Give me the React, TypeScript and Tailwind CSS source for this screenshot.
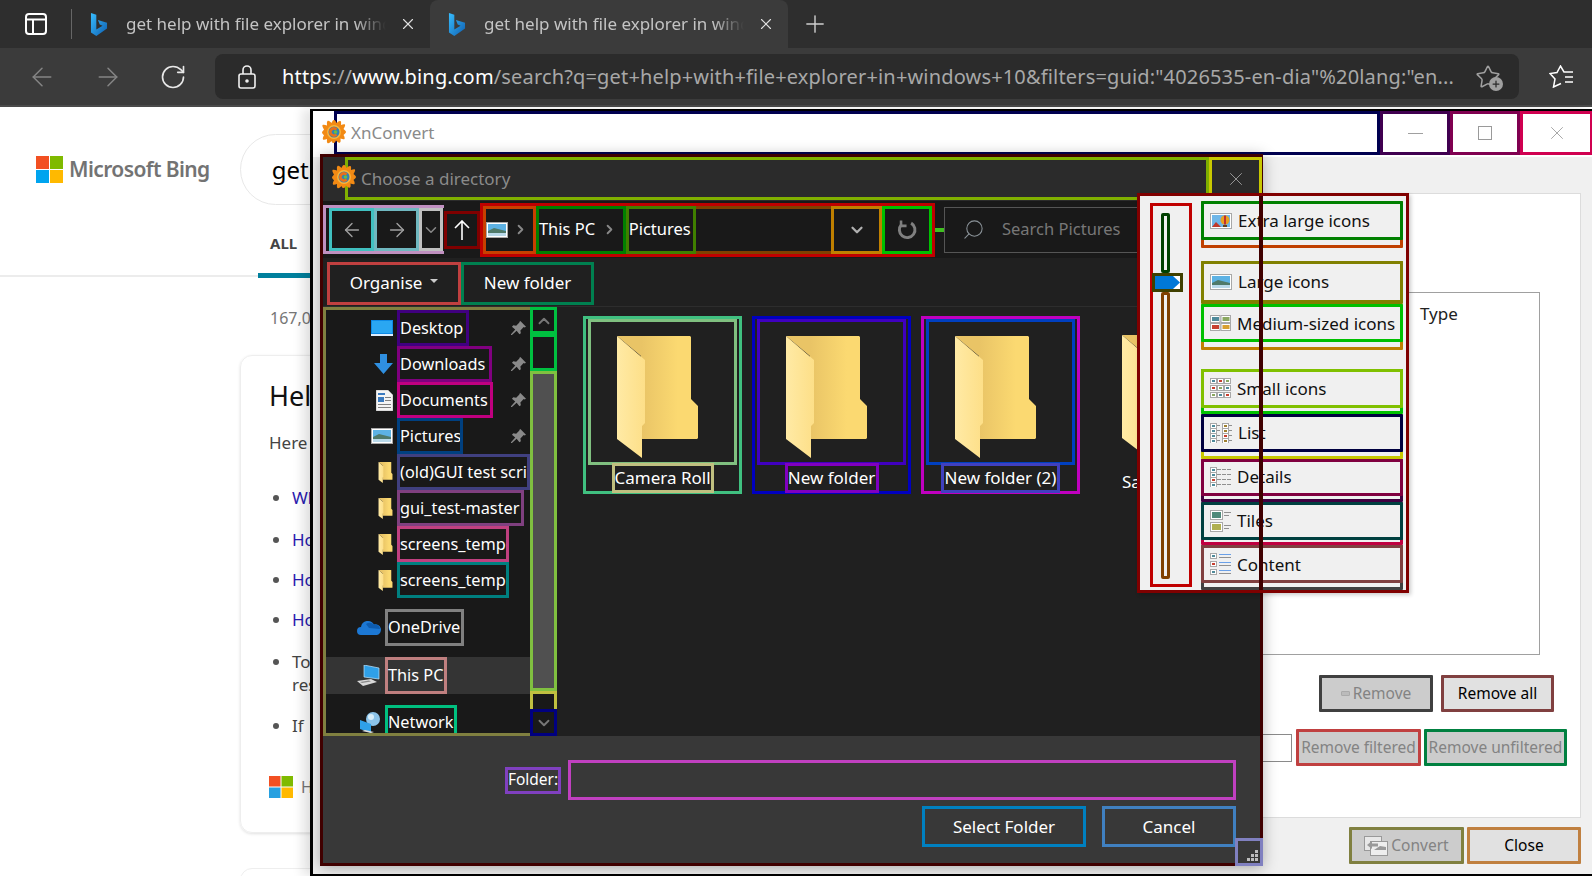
import React from "react";
import { ArrowLeft, ArrowRight, ChevronDown, ChevronRight, ChevronUp, Plus, RotateCw, Search, X, Star } from "lucide-react";

const Folder = ({ className }: { className: string }) => (
  <svg viewBox="0 0 81 122" className={className}>
    <defs>
      <linearGradient id="fb" x1="0" x2="1" y1="0" y2="0">
        <stop offset="0.3" stopColor="#e9c466" />
        <stop offset="0.75" stopColor="#fbd971" />
      </linearGradient>
      <linearGradient id="ff" x1="0" x2="1" y1="0" y2="0">
        <stop offset="0" stopColor="#ffeaa5" />
        <stop offset="1" stopColor="#fddf88" />
      </linearGradient>
    </defs>
    <path d="M0 0H73L74 1V63L81 70V102L80 103H24V20z" fill="url(#fb)" />
    <path d="M0 0L28 24V87L25 90V122L0 103z" fill="url(#ff)" />
  </svg>
);

const XnLogo = ({ className }: { className: string }) => (
  <svg viewBox="0 0 24 24" className={className}>
    <path d="M12 0c1.500 0 2 2 2.500 3 1-1 2.500-2.500 4-2 1 .5.500 2.500.5 4 1.500-.5 3-1 4-.5.500 1-.5 3-1.500 4.500 1 1 2.500 2 2.500 3s-1.500 2-2.500 3c1 1.500 1.500 3 1 4-1 .5-2.500 0-4-.5 0 1.500.5 3-.5 4s-3-1-4-2c-.5 1-1 2.500-2.500 2.500S10 22 9.500 21c-1 1-3 3-4 2s-.5-2.500-.5-4c-1.500.5-3 1-4 .5-.5-1 0-2.500 1-4C1.500 14.500 0 13.500 0 12.500s1.500-2 2-3C1 8 0 6 .5 5c1-.5 3 0 4.500.5 0-1.500-.5-3.500.5-4.500s3 1 4 2C10 2 10.500 0 12 0z" fill="#f28a14" />
    <circle cx="12" cy="12" r="7" fill="#fbb53a" />
    <circle cx="12" cy="12" r="5.500" fill="#2f82b8" />
    <path d="M15.500 8.500A5 5 0 1015.500 15.500L13.500 13.500A2.200 2.200 0 1113.500 10.500z" fill="#e8701a" />
    <circle cx="13.500" cy="12" r="1.800" fill="#6dbb3f" />
  </svg>
);

const Landscape = ({ className }: { className: string }) => (
  <svg viewBox="0 0 22 16" className={className}>
    <rect x="0.5" y="0.5" width="21" height="15" fill="#fff" stroke="#a8a8a8" />
    <rect x="2" y="2" width="18" height="7" fill="#5db2e4" />
    <path d="M2 9L8 6l12 3v5H2z" fill="#4f7a6a" />
    <rect x="2" y="11" width="18" height="3" fill="#b9d9ea" />
  </svg>
);

const Thumb = ({ x, y, c }: { x: number; y: number; c: string }) => (
  <g>
    <rect x={x + 0.5} y={y + 0.5} width="6" height="5" fill="#fff" stroke="#a8a8a8" />
    <rect x={x + 2} y={y + 2} width="3" height="2" fill={c} />
  </g>
);

const ExtraIcon = () => (
  <svg viewBox="0 0 22 16" className="w-[22px] h-4 shrink-0">
    <rect x="0.5" y="0.5" width="21" height="15" fill="#fff" stroke="#a8a8a8" />
    <rect x="2" y="2" width="18" height="12" fill="#6fb6e8" />
    <path d="M2 14l4-5 5 5z" fill="#c0392b" />
    <circle cx="15" cy="7" r="4.5" fill="#e8a020" />
    <rect x="14" y="2.5" width="2" height="9" fill="#c03030" />
    <rect x="13" y="12" width="4" height="2" fill="#604020" />
  </svg>
);
const MediumIcon = () => (
  <svg viewBox="0 0 21 16" className="w-[21px] h-4 shrink-0">
    <rect x="0.5" y="0.5" width="9.5" height="7" fill="#fff" stroke="#a8a8a8" />
    <rect x="11" y="0.5" width="9.5" height="7" fill="#fff" stroke="#a8a8a8" />
    <rect x="0.5" y="8.5" width="9.5" height="7" fill="#fff" stroke="#a8a8a8" />
    <rect x="11" y="8.5" width="9.5" height="7" fill="#fff" stroke="#a8a8a8" />
    <rect x="2" y="2" width="7" height="4" fill="#4f8a9a" />
    <rect x="12.5" y="2" width="7" height="4" fill="#8aa860" />
    <rect x="2" y="10" width="7" height="4" fill="#c84030" />
    <rect x="12.5" y="10" width="7" height="4" fill="#d8a030" />
  </svg>
);
const SmallIcon = () => (
  <svg viewBox="0 0 21 21" className="w-[21px] h-[21px] shrink-0">
    {[0, 7, 14].map((y) =>
      [0, 7, 14].map((x, i) => <Thumb key={`${x}-${y}`} x={x} y={y} c={["#4f8a9a", "#c84030", "#8aa860"][(i + y) % 3]} />)
    )}
  </svg>
);
const ListIcon = () => (
  <svg viewBox="0 0 22 20" className="w-[22px] h-5 shrink-0">
    {[0, 5, 10, 15].map((y) => (
      <g key={y}>
        <Thumb x={0} y={y} c="#4f8a9a" />
        <rect x="7" y={y + 2} width="3" height="1" fill="#909090" />
        <Thumb x={12} y={y} c={y === 10 ? "#c84030" : "#a08030"} />
        <rect x="19" y={y + 2} width="3" height="1" fill="#909090" />
      </g>
    ))}
  </svg>
);
const DetailsIcon = () => (
  <svg viewBox="0 0 21 20" className="w-[21px] h-5 shrink-0">
    {[0, 5, 10, 15].map((y) => (
      <g key={y}>
        <Thumb x={0} y={y} c={y === 10 ? "#c84030" : "#4f8a9a"} />
        <rect x="7" y={y + 2} width="4" height="1" fill="#909090" />
        <rect x="12" y={y + 2} width="4" height="1" fill="#909090" />
        <rect x="17" y={y + 2} width="4" height="1" fill="#909090" />
      </g>
    ))}
  </svg>
);
const TilesIcon = () => (
  <svg viewBox="0 0 21 22" className="w-[21px] h-[22px] shrink-0">
    <rect x="0.5" y="0.5" width="12" height="9" fill="#fff" stroke="#a8a8a8" />
    <rect x="2" y="2" width="9" height="6" fill="#4f8a7a" />
    <rect x="14" y="2" width="7" height="1" fill="#909090" />
    <rect x="14" y="5" width="5" height="1" fill="#909090" />
    <rect x="0.5" y="12.5" width="12" height="9" fill="#fff" stroke="#a8a8a8" />
    <rect x="2" y="14" width="9" height="6" fill="#b0b050" />
    <rect x="14" y="15" width="7" height="1" fill="#909090" />
    <rect x="14" y="18" width="5" height="1" fill="#909090" />
  </svg>
);
const ContentIcon = () => (
  <svg viewBox="0 0 21 22" className="w-[21px] h-[22px] shrink-0">
    {[0, 8, 16].map((y) => (
      <g key={y}>
        <Thumb x={0} y={y} c={y === 8 ? "#c84030" : "#4f8a9a"} />
        <rect x="9" y={y + 1} width="12" height="1" fill="#6aa0e8" />
        <rect x="9" y={y + 4} width="12" height="1" fill="#909090" />
      </g>
    ))}
  </svg>
);

const BingB = () => (
  <svg viewBox="0 0 20 28" className="w-[18px] h-[25px] shrink-0">
    <defs>
      <linearGradient id="bb" x1="0" x2="1" y1="0" y2="1">
        <stop offset="0" stopColor="#37bdff" />
        <stop offset="1" stopColor="#0f5fb0" />
      </linearGradient>
    </defs>
    <path d="M1 1l6 2v16.5l7-4-3.2-1.6-2-5L19 12v6.5L7 27l-6-4z" fill="url(#bb)" />
  </svg>
);

const Tab = ({ active }: { active?: boolean }) => (
  <div className={`flex h-[48px] w-[358px] items-center pl-[18px] ${active ? "rounded-t-lg bg-[#3b3b3b]" : ""}`}>
    <BingB />
    <span className="ml-[18px] w-[260px] overflow-hidden whitespace-nowrap text-[17px] text-[#c4c4c4] [mask-image:linear-gradient(to_right,black_88%,transparent)]">
      get help with file explorer in windows 10
    </span>
    <X className="ml-[13px] size-[18px] text-[#e0e0e0]" strokeWidth={1.5} />
  </div>
);

const pinned = (
  <svg viewBox="0 0 16 16" className="absolute right-[4px] top-[11px] size-[15px]">
    <path d="M10 0l6 6-1.5 1-1-.5L10 10l.5 3-1.5 1-3-3.500L1 15l-1 0 0-1 4.500-5L1 6l1.500-1.500 3 .5L9 1.500 8.800 1z" fill="#8a8a8a" />
  </svg>
);

const DesktopIcon = () => (
  <svg viewBox="0 0 22 16" className="w-[22px] h-4"><rect width="22" height="16" fill="#0d8ae6" /><rect x="1" y="1" width="20" height="12" fill="#2aa7f2" /><rect y="14" width="22" height="2" fill="#ddeeff" /></svg>
);
const DownIcon = () => (
  <svg viewBox="0 0 19 20" className="w-[19px] h-5"><path d="M6 0h7v9h6l-9.5 11L0 9h6z" fill="#2f8fe0" /></svg>
);
const DocIcon = () => (
  <svg viewBox="0 0 17 21" className="w-[17px] h-[21px]">
    <path d="M0 0h12l5 5v16H0z" fill="#f4f4f4" stroke="#9a9a9a" strokeWidth="0.6" />
    <rect x="2" y="3" width="7" height="2" fill="#3a7abf" />
    <rect x="2" y="7" width="6" height="5" fill="#3a7abf" />
    <rect x="9" y="7" width="6" height="1" fill="#808080" /><rect x="9" y="10" width="6" height="1" fill="#808080" />
    <rect x="2" y="14" width="13" height="1" fill="#808080" /><rect x="2" y="17" width="13" height="1" fill="#808080" />
  </svg>
);
const Cloud = () => (
  <svg viewBox="0 0 24 15" className="w-6 h-[15px]"><path d="M4 15a4 4 0 010-8 7 7 0 0113-2.500A5 5 0 0120 15z" fill="#1c78d4" /><path d="M9 4a7 7 0 018 .5A5 5 0 0123 9L12 8z" fill="#0d5cb0" /></svg>
);
const PcIcon = () => (
  <svg viewBox="0 0 24 21" className="w-6 h-[21px]">
    <path d="M7 0l15 3v11L7 12z" fill="#2fa0e8" stroke="#bfe4fa" strokeWidth="0.7" />
    <path d="M0 16l14-2 6 3-14 4z" fill="#d8d8d8" />
    <path d="M3 17l9-1.500 2 1-9 1.500z" fill="#888" />
  </svg>
);
const NetIcon = () => (
  <svg viewBox="0 0 22 21" className="w-[22px] h-[21px]">
    <circle cx="14" cy="7" r="7" fill="#8cc4ea" /><circle cx="12" cy="5" r="3" fill="#d8eefa" />
    <path d="M1 8l11 4v9L1 17z" fill="#2fa0e8" />
    <path d="M3 19l9 2 3-1-9-2z" fill="#ddd" />
  </svg>
);

const NavRow = ({ icon, label, color, pin }: { icon: React.ReactNode; label: string; color: string; pin?: boolean }) => (
  <div className="relative flex h-[36px] items-stretch">
    <div className="flex w-[71px] shrink-0 items-center justify-end pr-[4px]">{icon}</div>
    <span className={`flex items-center overflow-hidden whitespace-nowrap border-[3px] text-[16.3px] ${color}`}>{label}</span>
    {pin && pinned}
  </div>
);

const FolderTile = ({ label, outer, inner, lab, w }: { label: string; outer: string; inner: string; lab: string; w: string }) => (
  <div className={`relative flex h-[178px] w-[159px] shrink-0 flex-col items-center border-[3px] ${outer}`}>
    <div className={`flex h-[146px] w-[149px] shrink-0 justify-center border-[3px] pt-[14px] ${inner}`}>
      <Folder className="ml-[-10px] h-[122px] w-[81px]" />
    </div>
    <span className={`mt-[-2px] flex h-[30px] shrink-0 items-center justify-center whitespace-nowrap border-[3px] ${w} ${lab}`}>{label}</span>
  </div>
);

const MenuItem = ({ icon, label, inner, outer, h, oh, mt }: { icon: React.ReactNode; label: string; inner: string; outer: string; h: string; oh: string; mt?: string }) => (
  <div className={`rounded-[1px] border-[3px] ${outer} ${oh} ${mt ?? ""}`}>
    <div className={`-m-[3px] flex items-center gap-[6px] rounded-[1px] border-[3px] pl-[6px] ${inner} ${h}`}>
      {icon}
      <span className="whitespace-nowrap">{label}</span>
    </div>
  </div>
);

const GreyBtn = ({ label, box, icon, w, dark }: { label: string; box: string; icon?: React.ReactNode; w: string; dark?: boolean }) => (
  <div className={`flex h-[37px] items-center justify-center gap-[3px] rounded-[1px] border-[3px] text-[15.5px] ${box} ${w} ${dark ? "bg-[#e1e1e1] text-black" : "bg-[#cccccc] text-[#838383]"}`}>
    {icon}
    <span className="whitespace-nowrap">{label}</span>
  </div>
);

export default function App() {
  return (
    <div className="relative flex h-[876px] w-[1592px] flex-col overflow-hidden bg-white font-['Noto_Sans',sans-serif]">
      {/* Browser tabs */}
      <div className="flex h-[48px] shrink-0 items-center bg-[#2e2e2e]">
        <div className="flex w-[71px] justify-center">
          <svg viewBox="0 0 22 22" className="size-[22px]" fill="none" stroke="#fff" strokeWidth="2">
            <rect x="1" y="1" width="20" height="20" rx="3" />
            <path d="M1 6.500h20M8 6.500V21" />
          </svg>
        </div>
        <div className="h-[30px] w-px bg-[#666]" />
        <Tab />
        <Tab active />
        <Plus className="ml-[13px] size-[28px] text-[#d0d0d0]" strokeWidth={1.2} />
      </div>

      {/* Address bar */}
      <div className="flex h-[59px] shrink-0 items-center border-b-2 border-[#4a4a4a] bg-[#3b3b3b]">
        <ArrowLeft className="ml-[27px] size-[30px] text-[#858585]" strokeWidth={1.2} />
        <ArrowRight className="ml-[36px] size-[30px] text-[#858585]" strokeWidth={1.2} />
        <RotateCw className="ml-[36px] size-[28px] text-[#e8e8e8]" strokeWidth={1.4} />
        <div className="ml-[28px] flex h-[45px] w-[1304px] items-center rounded-lg bg-[#2b2b2b] pl-[23px] text-[20px] text-[#a8a8a8]">
          <svg viewBox="0 0 18 24" className="h-[24px] w-[18px] shrink-0" fill="none" stroke="#f0f0f0" strokeWidth="1.6">
            <rect x="1" y="9" width="16" height="14" rx="2" />
            <path d="M5 9V5a4 4 0 018 0v4" />
            <circle cx="9" cy="16" r="1" fill="#f0f0f0" />
          </svg>
          <span className="ml-[26px] whitespace-nowrap tracking-[0.16px]">
            <span className="text-white">https</span>://<span className="text-white">www.bing.com</span>/search?q=get+help+with+file+explorer+in+windows+10&filters=guid:"4026535-en-dia"%20lang:"en...
          </span>
          <div className="relative ml-auto mr-[18px] shrink-0">
            <Star className="size-[26px] text-[#a0a0a0]" strokeWidth={1.4} />
            <div className="absolute -bottom-[1px] -right-[2px] flex size-[14px] items-center justify-center rounded-full bg-[#a0a0a0]">
              <Plus className="size-[10px] text-[#2b2b2b]" strokeWidth={3} />
            </div>
          </div>
        </div>
        <svg viewBox="0 0 24 23" className="ml-[30px] h-[23px] w-[24px]" fill="none" stroke="#fff" strokeWidth="1.5">
          <path d="M24 7H15L11.500 1 8 7.500 1 8.500 6 14 4.500 22l7.500-3.500M16 12h8M16 17h8" />
        </svg>
      </div>

      {/* Search page behind the windows */}
      <div className="w-[310px] flex-1 overflow-hidden bg-white">
        <div className="mt-[27px] flex h-[71px] items-center pl-[36px]">
          <svg viewBox="0 0 27 27" className="size-[27px] shrink-0">
            <rect width="13" height="13" fill="#f25022" /><rect x="14" width="13" height="13" fill="#7fba00" />
            <rect y="14" width="13" height="13" fill="#00a4ef" /><rect x="14" y="14" width="13" height="13" fill="#ffb900" />
          </svg>
          <span className="ml-[6px] whitespace-nowrap text-[21px] font-semibold tracking-[-0.6px] text-[#737373]">Microsoft Bing</span>
          <div className="ml-[30px] flex h-[71px] w-[700px] shrink-0 items-center rounded-[36px] border border-[#e8e8e8] pl-[31px] text-[24px] text-black">get</div>
        </div>
        <div className="mt-[25px] h-[47px] border-b-2 border-[#ececec] pl-[258px]">
          <div className="h-[48px] w-[60px] border-b-[5px] border-[#00809d] pl-[12px] pt-[2px] text-[15px] font-bold text-[#444]">ALL</div>
        </div>
        <div className="ml-[270px] mt-[31px] whitespace-nowrap text-[16px] leading-5 text-[#767676]">167,000 results</div>
        <div className="ml-[240px] mt-[27px] h-[478px] w-[700px] rounded-xl border border-[#eeeeee] pl-[28px] pt-[20px] shadow-[0_1px_3px_rgba(0,0,0,0.12)]">
          <div className="text-[27px] leading-[40px] text-[#111]">Help</div>
          <div className="mt-[15px] text-[17px] leading-6 text-[#444]">Here</div>
          <ul className="mt-[31px] flex list-disc flex-col pl-[23px] text-[17px] leading-[23px] text-[#444] marker:text-[#555]">
            <li className="text-[#2a1ab0]">What</li>
            <li className="mt-[19px] text-[#2a1ab0]">How</li>
            <li className="mt-[17px] text-[#2a1ab0]">How</li>
            <li className="mt-[17px] text-[#2a1ab0]">How</li>
            <li className="mt-[19px]">To<br />restart</li>
            <li className="mt-[18px]">If</li>
          </ul>
          <div className="mt-[38px] flex items-center">
            <svg viewBox="0 0 24 22" className="h-[22px] w-[24px]">
              <rect width="11.500" height="10.500" fill="#f25022" /><rect x="12.500" width="11.500" height="10.500" fill="#7fba00" />
              <rect y="11.500" width="11.500" height="10.500" fill="#27a0e0" /><rect x="12.500" y="11.500" width="11.500" height="10.500" fill="#ffb900" />
            </svg>
            <span className="ml-[8px] text-[16px] text-[#777]">Help</span>
          </div>
        </div>
        <div className="ml-[240px] mt-[35px] h-[60px] w-[700px] rounded-xl border border-[#eeeeee]" />
      </div>

      {/* XnConvert window */}
      <div className="absolute left-[310px] top-[109px] flex h-[767px] w-[1282px] flex-col border-b-[2px] border-l-[3px] border-t-[2px] border-black bg-[#f0f0f0] shadow-[-8px_0_10px_rgba(0,0,0,0.1)]">
        <div className="relative flex h-[46px] shrink-0 bg-white text-[#8a8a8a]">
          <XnLogo className="absolute left-[9px] top-[9px] size-[24px]" />
          <div className="ml-[21px] flex h-[44px] w-[1046px] shrink-0 items-center border-[3px] border-[#000050] pl-[14px] text-[17px]">XnConvert</div>
          <div className="flex h-[44px] w-[70px] shrink-0 items-center justify-center border-[3px] border-[#400050]"><div className="h-px w-[15px] bg-[#a0a0a0]" /></div>
          <div className="flex h-[44px] w-[70px] shrink-0 items-center justify-center border-[3px] border-[#800050]"><div className="h-[14px] w-[14px] border border-[#9a9a9a]" /></div>
          <div className="flex h-[44px] w-[73px] shrink-0 items-center justify-center border-[3px] border-[#d00050]"><X className="size-[22px] text-[#a0a0a0]" strokeWidth={1} /></div>
        </div>
        <div className="flex flex-1 flex-col pb-[11px] pl-[20px] pr-[11px] pt-[36px] text-[16px]">
          <div className="flex h-[625px] shrink-0 flex-col border border-[#dcdcdc] bg-white pr-[40px] pt-[98px]">
            <div className="flex h-[363px] shrink-0 justify-end border border-[#a0a0a0]">
              <div className="h-[40px] w-[127px] pl-[8px] pt-[8px] text-[17px] text-[#222]">Type</div>
            </div>
            <div className="-mr-[14px] mt-[20px] flex justify-end gap-[8px]">
              <GreyBtn label="Remove" box="border-[#404040]" w="w-[114px]" icon={<span className="h-[5px] w-[9px] rounded-[1px] border border-[#aaa] bg-[#bbb]" />} />
              <GreyBtn label="Remove all" box="border-[#804040]" w="w-[113px]" dark />
            </div>
            <div className="-mr-[27px] mt-[17px] flex items-center justify-end gap-[3px]">
              <div className="mr-[1px] h-[28px] w-[100px] border border-[#8a8a8a] bg-white" />
              <GreyBtn label="Remove filtered" box="border-[#c04040]" w="w-[125px]" />
              <GreyBtn label="Remove unfiltered" box="border-[#008040]" w="w-[143px]" />
            </div>
          </div>
          <div className="mt-[9px] flex justify-end gap-[3px]">
            <GreyBtn
              label="Convert"
              box="border-[#808040]"
              w="w-[115px]"
              icon={
                <svg viewBox="0 0 24 20" className="h-[20px] w-[24px]">
                  <rect x="0.500" y="0.500" width="17" height="14" fill="#e8e8e8" stroke="#999" />
                  <rect x="6.500" y="5.500" width="17" height="14" fill="#eee" stroke="#999" />
                  <path d="M3 9l5-4v2.500h6v3H8V13zM22 14H10l6-4 6 1z" fill="#9a9a9a" />
                </svg>
              }
            />
            <GreyBtn label="Close" box="border-[#c08040]" w="w-[114px]" dark />
          </div>
        </div>
      </div>

      {/* Directory dialog */}
      <div className="absolute left-[320px] top-[154px] flex h-[712px] w-[943px] flex-col border-[3px] border-[#400000] bg-[#202020] text-[17px] text-white shadow-[0_2px_14px_rgba(0,0,0,0.3)]">
        <div className="relative flex h-[44px] shrink-0 bg-[#2b2b2b] text-[#8a8a8a]">
          <XnLogo className="absolute left-[9px] top-[8px] size-[24px]" />
          <div className="ml-[22px] flex h-[43px] w-[864px] shrink-0 items-center border-[3px] border-[#80b000] pl-[13px] text-[17px]">Choose a directory</div>
          <div className="flex h-[43px] w-[53px] shrink-0 items-center justify-center border-[3px] border-[#c8c800]"><X className="size-[22px] text-[#a0a0a0]" strokeWidth={1} /></div>
        </div>

        <div className="flex h-[57px] shrink-0 items-center bg-[#191919]">
          <div className="flex h-[49px] w-[121px] shrink-0 border-y-[3px] border-l-[3px] border-[#c090c0] pl-[3px]">
            <div className="flex w-[45px] items-center justify-center border-[3px] border-[#40c0c0]"><ArrowLeft className="size-[22px] text-[#a0a0a0]" strokeWidth={1.5} /></div>
            <div className="flex w-[45px] items-center justify-center border-[3px] border-[#70b8c0]"><ArrowRight className="size-[22px] text-[#a0a0a0]" strokeWidth={1.5} /></div>
            <div className="flex w-[24px] items-center justify-center border-[3px] border-[#c0c0c0]"><ChevronDown className="size-[18px] text-[#8a8a8a]" strokeWidth={2} /></div>
          </div>
          <div className="flex h-[38px] w-[36px] shrink-0 items-center justify-center border-[3px] border-[#800000]"><svg viewBox="0 0 16 20" className="h-[20px] w-[16px]" fill="none" stroke="#fff" strokeWidth="1.6"><path d="M8 20V1M1 8l7-7 7 7" /></svg></div>
          <div className="flex h-[54px] w-[455px] shrink-0 items-center border-[3px] border-[#c00000] text-[16.5px]">
            <div className="flex h-[48px] w-[53px] items-center border-[3px] border-[#c84000]">
              <Landscape className="h-[16px] w-[22px] shrink-0" />
              <ChevronRight className="ml-[5px] size-[15px] shrink-0 text-[#888]" strokeWidth={3} />
            </div>
            <div className="flex h-[48px] w-[90px] items-center whitespace-nowrap border-[3px] border-[#008000]">This PC<ChevronRight className="ml-[7px] size-[15px] shrink-0 text-[#888]" strokeWidth={3} /></div>
            <div className="flex h-[48px] w-[70px] items-center whitespace-nowrap border-[3px] border-[#408000]">Pictures</div>
            <div className="h-[48px] w-[136px] border-y-[3px] border-[#804000]" />
            <div className="flex h-[48px] w-[51px] items-center justify-center border-[3px] border-[#c08000]"><ChevronDown className="size-[18px] text-[#b0b0b0]" strokeWidth={3} /></div>
            <div className="flex h-[48px] w-[50px] items-center justify-center border-[3px] border-[#00c000]">
              <svg viewBox="0 0 24 24" className="size-[22px]" fill="none" stroke="#808080" strokeWidth="3.2">
                <path d="M16.500 4.500a8.500 8.500 0 11-10.500 1.500" /><path d="M5.500 1.500v6h6" strokeWidth="2.800" />
              </svg>
            </div>
          </div>
          <div className="h-[4px] w-[9px] shrink-0 bg-[#40c020]" />
          <div className="flex h-[46px] flex-1 items-center border border-[#555] pl-[17px] text-[16.5px] text-[#777]">
            <Search className="size-[23px] -scale-x-100 text-[#8a9298]" strokeWidth={1.1} />
            <span className="ml-[17px] whitespace-nowrap">Search Pictures</span>
          </div>
        </div>

        <div className="flex h-[49px] shrink-0 items-center border-b border-[#2d2d2d] pl-[4px] pt-[2px]">
          <div className="flex h-[43px] w-[134px] shrink-0 items-center justify-center gap-[8px] border-[3px] border-[#c04040]">Organise
            <svg viewBox="0 0 8 4" className="mb-[4px] h-[4px] w-[8px]"><path d="M0 0h8L4 4z" fill="#ccc" /></svg>
          </div>
          <div className="flex h-[43px] w-[133px] shrink-0 items-center justify-center border-[3px] border-[#008050]">New folder</div>
          <div className="ml-auto mr-[20px] flex h-[40px] w-[42px] items-center border border-[#777] bg-[#555] pl-[6px]"><Landscape className="h-[16px] w-[22px]" /></div>
        </div>

        <div className="flex h-[429px] shrink-0">
          <div className="flex w-[234px] shrink-0 border-y-[3px] border-l-[3px] border-[#808040] bg-[#191919]">
            <div className="w-[204px] shrink-0 overflow-hidden">
              <NavRow icon={<DesktopIcon />} label="Desktop" color="w-[72px] border-[#400080]" pin />
              <NavRow icon={<DownIcon />} label="Downloads" color="w-[95px] border-[#800080]" pin />
              <NavRow icon={<DocIcon />} label="Documents" color="w-[96px] border-[#c00080]" pin />
              <NavRow icon={<Landscape className="h-4 w-[22px]" />} label="Pictures" color="w-[66px] border-[#004080]" pin />
              <NavRow icon={<Folder className="h-[21px] w-[15px]" />} label="(old)GUI test scri" color="w-[134px] border-[#404080]" />
              <NavRow icon={<Folder className="h-[21px] w-[15px]" />} label="gui_test-master" color="w-[127px] border-[#804080]" />
              <NavRow icon={<Folder className="h-[21px] w-[15px]" />} label="screens_temp" color="w-[112px] border-[#c04080]" />
              <NavRow icon={<Folder className="h-[21px] w-[15px]" />} label="screens_temp" color="w-[112px] border-[#008080]" />
              <div className="mt-[11px] flex h-[37px] items-stretch text-[16.3px]">
                <div className="flex w-[59px] shrink-0 items-center justify-end pr-[4px]"><Cloud /></div>
                <span className="flex w-[79px] items-center border-[3px] border-[#808080]">OneDrive</span>
              </div>
              <div className="mt-[11px] flex h-[37px] items-stretch bg-[#343434] text-[16.3px]">
                <div className="flex w-[59px] shrink-0 items-center justify-end pr-[4px]"><PcIcon /></div>
                <span className="flex w-[62px] items-center whitespace-nowrap border-[3px] border-[#c08080]">This PC</span>
              </div>
              <div className="mt-[11px] flex h-[34px] items-stretch text-[16.3px]">
                <div className="flex w-[59px] shrink-0 items-center justify-end pr-[4px]"><NetIcon /></div>
                <span className="flex w-[72px] items-center border-[3px] border-[#00c080]">Network</span>
              </div>
            </div>
            <div className="-my-[3px] flex w-[27px] shrink-0 flex-col">
              <div className="flex h-[27px] shrink-0 items-center justify-center border-[3px] border-[#00c040]"><ChevronUp className="size-[18px] text-[#777]" strokeWidth={2.5} /></div>
              <div className="h-[37px] shrink-0 border-[3px] border-[#00c040]" />
              <div className="h-[320px] shrink-0 border-[3px] border-[#80c040] bg-[#505050]" />
              <div className="h-[18px] shrink-0 border-x-[3px] border-t-[3px] border-[#c0c040]" />
              <div className="flex h-[27px] shrink-0 items-center justify-center border-[3px] border-[#000080]"><ChevronDown className="size-[18px] text-[#777]" strokeWidth={2.5} /></div>
            </div>
          </div>
          <div className="flex flex-1 gap-[10px] overflow-hidden pl-[26px] pt-[9px]">
            <FolderTile label="Camera Roll" outer="border-[#40c080]" inner="border-[#80c080]" lab="border-[#c0c080]" w="w-[102px]" />
            <FolderTile label="New folder" outer="border-[#0000c0]" inner="border-[#4000c0]" lab="border-[#8000c0]" w="w-[94px]" />
            <FolderTile label="New folder (2)" outer="border-[#c000c0]" inner="border-[#0040c0]" lab="border-[#4040c0]" w="w-[119px]" />
            <div className="w-[100px] shrink-0 overflow-hidden pl-[32px] pt-[19px]">
              <Folder className="h-[122px] w-[81px]" />
              <span className="mt-[12px] block w-[68px] overflow-hidden whitespace-nowrap">Saved</span>
            </div>
          </div>
        </div>

        <div className="relative flex flex-1 flex-col items-end bg-[#383838] pr-[24px] pt-[24px]">
          <div className="flex items-center gap-[7px]">
            <span className="flex h-[27px] w-[56px] items-center justify-center whitespace-nowrap border-[3px] border-[#8040c0] text-[15.5px]">Folder:</span>
            <div className="h-[40px] w-[668px] border-[3px] border-[#c040c0]" />
          </div>
          <div className="mt-[6px] flex gap-[16px]">
            <div className="flex h-[41px] w-[164px] items-center justify-center border-[3px] border-[#0080c0]">Select Folder</div>
            <div className="flex h-[41px] w-[134px] items-center justify-center border-[3px] border-[#4080c0]">Cancel</div>
          </div>
          <div className="absolute bottom-[-3px] right-[-3px] flex h-[28px] w-[28px] items-end justify-end border-[3px] border-[#8080c0] p-[2px]">
            <svg viewBox="0 0 11 11" className="size-[11px]" fill="#bdbdbd">
              <rect x="8" y="0" width="3" height="3" /><rect x="4" y="4" width="3" height="3" /><rect x="8" y="4" width="3" height="3" />
              <rect x="0" y="8" width="3" height="3" /><rect x="4" y="8" width="3" height="3" /><rect x="8" y="8" width="3" height="3" />
            </svg>
          </div>
        </div>
      </div>

      {/* View popup */}
      <div className="absolute left-[1137px] top-[193px] flex h-[400px] w-[272px] border-[3px] border-[#800000] bg-[#f0f0f0] pl-[10px] pt-[7px] text-[17px] text-[#111] shadow-[2px_2px_4px_rgba(0,0,0,0.2)]">
        <div className="h-[384px] w-[42px] shrink-0 border-[3px] border-[#c00000] pl-[8px] pt-[7px]">
          <div className="h-[60px] w-[9px] rounded-[2px] border-[3px] border-[#004000]" />
          <div className="relative z-10 -ml-[9px] h-[19px] w-[31px] border-[3px] border-[#404000] bg-white">
            <svg viewBox="0 0 25 13" className="h-[13px] w-[25px]"><path d="M0 0H18L25 6.500 18 13H0z" fill="#0078d7" /></svg>
          </div>
          <div className="h-[287px] w-[9px] rounded-[2px] border-[3px] border-[#804000]" />
        </div>
        <div className="-mt-[2px] ml-[9px] flex w-[202px] shrink-0 flex-col">
          <MenuItem icon={<ExtraIcon />} label="Extra large icons" inner="border-[#008000]" outer="border-[#c04000]" h="h-[39px]" oh="h-[47px]" />
          <MenuItem mt="mt-[13px]" icon={<Landscape className="h-4 w-[22px] shrink-0" />} label="Large icons" inner="border-[#808000]" outer="border-[#808000]" h="h-[42px]" oh="h-[44px]" />
          <MenuItem icon={<MediumIcon />} label="Medium-sized icons" inner="border-[#00c000]" outer="border-[#c08000]" h="h-[38px]" oh="h-[46px]" />
          <MenuItem mt="mt-[19px]" icon={<SmallIcon />} label="Small icons" inner="border-[#80c000]" outer="border-[#00c000]" h="h-[39px]" oh="h-[45px]" />
          <MenuItem icon={<ListIcon />} label="List" inner="border-[#000040]" outer="border-[#c8c800]" h="h-[38px]" oh="h-[45px]" />
          <MenuItem icon={<DetailsIcon />} label="Details" inner="border-[#800040]" outer="border-[#400040]" h="h-[37px]" oh="h-[43px]" />
          <MenuItem icon={<TilesIcon />} label="Tiles" inner="border-[#004040]" outer="border-[#c00040]" h="h-[38px]" oh="h-[44px]" />
          <MenuItem icon={<ContentIcon />} label="Content" inner="border-[#804040]" outer="border-[#404040]" h="h-[38px]" oh="h-[45px]" />
        </div>
        <div className="absolute bottom-0 left-[119px] top-0 w-[4px] bg-[#400000]" />
      </div>
    </div>
  );
}
